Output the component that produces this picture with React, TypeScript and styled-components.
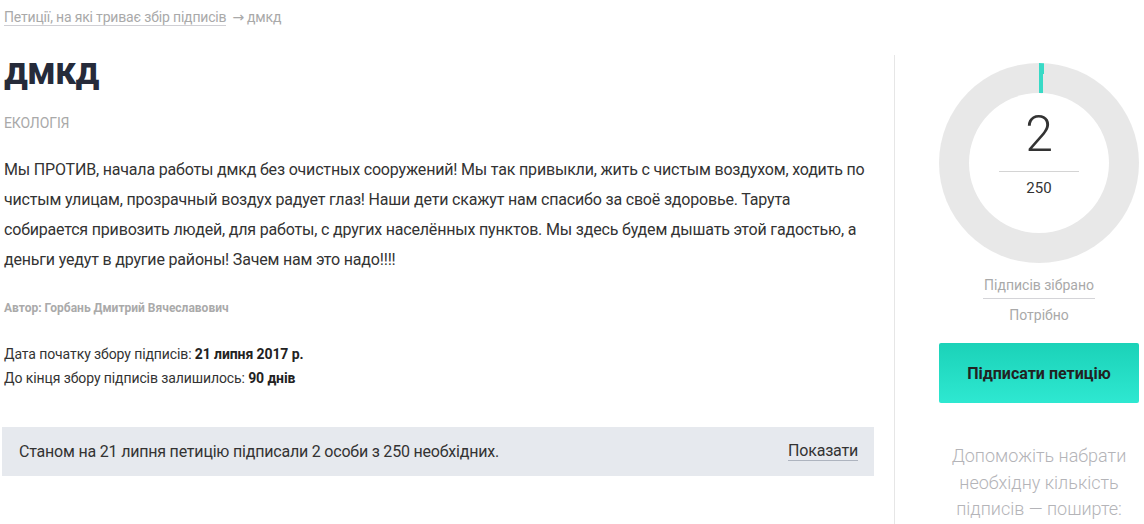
import React from "react"
import styled, { createGlobalStyle } from "styled-components"

const GlobalStyle = createGlobalStyle`
  body {
    margin: 0;
    background: #fff;
    font-family: Roboto, "Liberation Sans", Arial, sans-serif;
    color: #333;
  }
`

const Page = styled.div`
  padding: 8px 5px 0 4px;
  width: 1144px;
  height: 524px;
  box-sizing: border-box;
  overflow: hidden;
`

const Breadcrumbs = styled.div`
  font-size: 14px;
  line-height: 18px;
  letter-spacing: -0.17px;
  color: #a9a9a9;
`

const CrumbLink = styled.a`
  color: #a9a9a9;
  text-decoration: none;
  border-bottom: 1px solid #cfcfd4;
  margin-right: 6px;
`

const Arrow = styled.span`
  font-family: "DejaVu Sans", sans-serif;
  font-size: 14px;
  margin-right: 3px;
`

const Layout = styled.div`
  display: flex;
  margin-top: 29px;
`

const Main = styled.main`
  width: 870px;
  flex-shrink: 0;
`

const Divider = styled.div`
  width: 1px;
  background: #e6e6e6;
  margin: 0 44px 0 20px;
  height: 600px;
`

const Side = styled.aside`
  width: 200px;
  display: flex;
  flex-direction: column;
  align-items: center;
  padding-top: 8px;
`

const Title = styled.h1`
  margin: -6px 0 0;
  font-size: 38px;
  line-height: 44px;
  font-weight: 700;
  color: #262b3a;
  letter-spacing: -0.8px;
`

const Category = styled.div`
  margin-top: 22px;
  font-size: 14px;
  line-height: 16px;
  letter-spacing: -0.1px;
  color: #a9a9a9;
  text-transform: uppercase;
`

const Body = styled.p`
  margin: 24px 0 0;
  max-width: 866px;
  font-size: 16px;
  line-height: 30px;
  letter-spacing: -0.18px;
  color: #333;
`

const Author = styled.div`
  margin-top: 26px;
  font-size: 12px;
  line-height: 14px;
  font-weight: 700;
  color: #aaa;
`

const Dates = styled.div`
  margin-top: 27px;
  font-size: 14px;
  line-height: 24px;
  letter-spacing: -0.1px;
  color: #333;

  b {
    font-weight: 700;
    color: #222;
  }
`

const Notice = styled.div`
  margin-top: 37px;
  margin-left: -2px;
  height: 49px;
  background: #e6e9ee;
  display: flex;
  align-items: center;
  justify-content: space-between;
  padding: 0 16px 0 17px;
  font-size: 16px;
  letter-spacing: -0.2px;
  color: #333;
`

const ShowLink = styled.a`
  color: #333;
  text-decoration: none;
  border-bottom: 1px solid #aeb4bf;
  line-height: 18px;
`

const Ring = styled.div<{ pct: number }>`
  width: 200px;
  height: 200px;
  border-radius: 50%;
  background: conic-gradient(#38dac6 0 ${(p) => p.pct * 3.6}deg, #e8e8e8 0);
  display: flex;
  align-items: center;
  justify-content: center;
`

const RingInner = styled.div`
  width: 140px;
  height: 140px;
  border-radius: 50%;
  background: #fff;
  display: flex;
  flex-direction: column;
  align-items: center;
  padding-top: 16px;
  box-sizing: border-box;
`

const Count = styled.div`
  font-size: 50px;
  font-weight: 300;
  line-height: 50px;
  color: #333;
`

const CountLine = styled.div`
  width: 80px;
  height: 1px;
  background: #d4d4d4;
  margin-top: 12px;
`

const Needed = styled.div`
  font-size: 15px;
  line-height: 18px;
  margin-top: 7px;
  color: #333;
`

const Labels = styled.div`
  margin-top: 12px;
  display: flex;
  flex-direction: column;
  align-items: center;
  gap: 6px;
`

const Label = styled.div<{ underline?: boolean }>`
  font-size: 14px;
  color: #a9a9a9;
  line-height: 20px;
  padding: 0 1px 3px;
  ${(p) => (p.underline ? "border-bottom: 1px solid #d4d4d8;" : "")}
`

const SignButton = styled.button`
  margin-top: 15px;
  width: 200px;
  height: 60px;
  border: none;
  border-radius: 2px;
  background: linear-gradient(180deg, #1bd2b8 0%, #2ee8d1 100%);
  font-family: inherit;
  font-size: 16px;
  font-weight: 700;
  color: #222;
  cursor: pointer;
`

const Help = styled.div`
  margin-top: 40px;
  font-size: 18px;
  font-weight: 300;
  line-height: 26.5px;
  color: #b4b4b8;
  text-align: center;
`

const App: React.FC = () => {
  const signed = 2
  const needed = 250

  return (
    <Page>
      <GlobalStyle />
      <Breadcrumbs>
        <CrumbLink href="#">Петиції, на які триває збір підписів</CrumbLink>
        <Arrow>→</Arrow>дмкд
      </Breadcrumbs>
      <Layout>
        <Main>
          <Title>дмкд</Title>
          <Category>Екологія</Category>
          <Body>
            Мы ПРОТИВ, начала работы дмкд без очистных сооружений! Мы так привыкли, жить с чистым воздухом,
            ходить по чистым улицам, прозрачный воздух радует глаз! Наши дети скажут нам спасибо за своё
            здоровье. Тарута собирается привозить людей, для работы, с других населённых пунктов. Мы здесь
            будем дышать этой гадостью, а деньги уедут в другие районы! Зачем нам это надо!!!!
          </Body>
          <Author>Автор: Горбань Дмитрий Вячеславович</Author>
          <Dates>
            Дата початку збору підписів: <b>21 липня 2017 р.</b>
            <br />
            До кінця збору підписів залишилось: <b>90 днів</b>
          </Dates>
          <Notice>
            <span>Станом на 21 липня петицію підписали 2 особи з 250 необхідних.</span>
            <ShowLink href="#">Показати</ShowLink>
          </Notice>
        </Main>
        <Divider />
        <Side>
          <Ring pct={(signed / needed) * 100}>
            <RingInner>
              <Count>{signed}</Count>
              <CountLine />
              <Needed>{needed}</Needed>
            </RingInner>
          </Ring>
          <Labels>
            <Label underline>Підписів зібрано</Label>
            <Label>Потрібно</Label>
          </Labels>
          <SignButton>Підписати петицію</SignButton>
          <Help>
            Допоможіть набрати
            <br />
            необхідну кількість
            <br />
            підписів — поширте:
          </Help>
        </Side>
      </Layout>
    </Page>
  )
}

export default App
